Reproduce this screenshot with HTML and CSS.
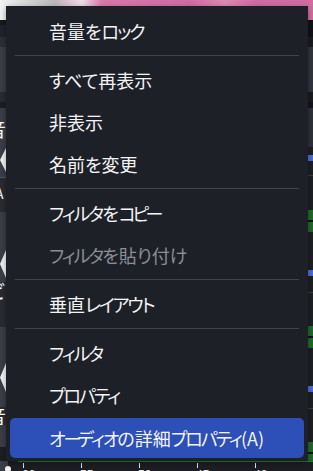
FILE: index.html
```html
<!DOCTYPE html>
<html lang="ja">
<head>
  <meta charset="UTF-8">
  <meta name="viewport" content="width=device-width, initial-scale=1.0">
  <title>音声ミキサー メニュー</title>
  <link rel="stylesheet" href="styles.css">
</head>
<body>
  <div class="app">
    <!-- Preview strip -->
    <div class="preview"></div>

    <!-- Audio mixer behind the menu -->
    <div class="mixer">
      <div class="edge edge-left">
        <div class="name name-1"><span>音</span></div>
        <div class="speaker speaker-1"></div>
        <div class="name name-2"><span>A</span></div>
        <div class="speaker speaker-2"></div>
        <div class="name name-3"><span>ビ</span></div>
        <div class="speaker speaker-3"></div>
        <div class="name name-4"><span>音</span></div>
      </div>
      <div class="mixer-body"></div>
      <div class="edge edge-right"></div>
    </div>

    <!-- dB scale -->
    <div class="scale">
      <div class="scale-knob"><span class="dot"></span></div>
      <div class="ticks">
        <div class="tick"><span>-60</span></div>
        <div class="tick"><span>-55</span></div>
        <div class="tick"><span>-50</span></div>
        <div class="tick"><span>-45</span></div>
        <div class="tick"><span>-40</span></div>
      </div>
    </div>
  </div>

  <!-- Context menu -->
  <div class="menu">
    <div class="item">音量を<span class="kana">ロック</span></div>
    <div class="sep"></div>
    <div class="item">すべて再表示</div>
    <div class="item">非表示</div>
    <div class="item">名前を変更</div>
    <div class="sep"></div>
    <div class="item"><span class="kana">フィルタ</span>を<span class="kana tight">コピ</span><span class="bar">ー</span></div>
    <div class="item disabled"><span class="kana">フィルタ</span>を貼り付け</div>
    <div class="sep"></div>
    <div class="item">垂直<span class="kana">レイアウト</span></div>
    <div class="sep"></div>
    <div class="item"><span class="kana">フィルタ</span></div>
    <div class="item"><span class="kana">プロパティ</span></div>
    <div class="item active"><span class="kana">オ</span><span class="bar">ー</span><span class="kana">ディオ</span>の詳細<span class="kana">プロパティ</span>(A)</div>
  </div>
</body>
</html>
```

FILE: styles.css
```css
:root {
  --menu-bg: #1e2028;
  --menu-text: #f4f4f6;
  --menu-muted: #8b8e96;
  --menu-sep: #41434d;
  --menu-active: #2c4fb8;
  --panel: #3b3d47;
  --panel-dark: #2a2b31;
  --mixer-bg: #1e1f24;
  --font-family: "Noto Sans CJK JP", "Noto Sans", sans-serif;
}
* { box-sizing: border-box; margin: 0; padding: 0; }
body { width: 313px; height: 471px; overflow: hidden; background-color: var(--mixer-bg); font-family: var(--font-family); }

.app { display: flex; flex-direction: column; height: 471px; }
.preview { height: 20px; background: linear-gradient(to right, #f3f3f3 0, #d8d8d8 25px, #b9b9b9 55px, #dcc3cf 68px, #ecdde4 82px, #d77aaa 102px, #cf6ca0 190px, #dc8ab4 225px, #cf6ca0 255px, #d06ea1 313px); }

.mixer { display: flex; height: 441px; }
.mixer-body { flex: 1; background-color: var(--mixer-bg); }
.edge { width: 6px; display: flex; flex-direction: column; align-items: stretch; overflow: hidden; }
.edge-right { width: 5px; background: linear-gradient(to bottom,
  #111216 0 17px, #1a1b1f 17px 27px, #33353e 27px 72px, #1a1b1f 72px 82px, #141518 82px 88px,
  #2f313a 88px 127px, #1e1f24 127px 135px, #4a6ed8 135px 141px, #1e1f24 141px 155px, #3b3d47 155px 156px,
  #1e1f24 156px 190px, #1e6a2a 190px 200px, #111216 200px 202px, #1e6a2a 202px 212px, #1e1f24 212px 250px,
  #4a6ed8 250px 256px, #1e1f24 256px 272px, #3b3d47 272px 273px, #1e1f24 273px 306px, #1e6a2a 306px 316px,
  #111216 316px 318px, #1e6a2a 318px 328px, #1e1f24 328px 366px, #4a6ed8 366px 372px, #1e1f24 372px 388px,
  #3b3d47 388px 389px, #1e1f24 389px 422px, #1e6a2a 422px 432px, #111216 432px 434px, #1e6a2a 434px 441px); }
.edge-left { background: linear-gradient(to bottom,
  #17181c 0 5px, #22232a 5px 17px, #2d2f36 17px 27px, var(--panel) 27px 72px, var(--panel-dark) 72px 82px,
  #1d1e23 82px 88px, var(--panel) 88px 157px, #55575f 157px 158px, var(--panel-dark) 158px 192px,
  var(--panel) 192px 262px, var(--panel-dark) 262px 307px, var(--panel) 307px 387px,
  var(--panel-dark) 387px 405px, var(--panel) 405px 427px, #1d1e23 427px 441px); }

.name { height: 18px; overflow: hidden; white-space: nowrap; color: #fff; font-size: 19px; line-height: 18px; }
.name span { display: block; margin-left: -13px; }
.name-1 { margin-top: 100px; height: 20px; }
.name-2 { margin-top: 15px; height: 13px; font-size: 14px; line-height: 13px; }
.name-2 span { margin-left: -5px; color: #f2f2ff; }
.name-3 { margin-top: 4px; }
.speaker { background-color: #f2f2f2; clip-path: polygon(0 50%, 100% 0, 100% 100%); }
.speaker-1 { margin-top: 8px; height: 24px; }
.speaker-2 { margin-top: 50px; height: 28px; }
.speaker-3 { margin-top: 63px; height: 29px; }
.name-4 { margin-top: 15px; }

.scale { height: 10px; display: flex; background-color: #1d1e23; overflow: hidden; }
.scale-knob { width: 27px; background-color: var(--panel); position: relative; }
.scale-knob .dot { position: absolute; left: 5px; top: 5px; width: 6px; height: 6px; border-radius: 50%; background-color: #f2f2f2; }
.ticks { flex: 1; display: flex; padding-left: 5px; border-top: 1px solid #2a7a34; margin-left: 10px; }
.tick { width: 58px; border-left: 1px solid #e8e8e8; height: 5px; margin-top: 1px; position: relative; flex-shrink: 0; }
.tick span { position: absolute; left: -6px; top: 6px; font-size: 12px; line-height: 12px; color: #e8e8e8; font-family: "Liberation Sans", sans-serif; }

/* Context menu */
.menu { position: absolute; left: 6px; top: 6px; width: 302px; height: 455px; padding: 4px 4px 3px; background-color: var(--menu-bg); box-shadow: 0 2px 6px rgba(0,0,0,0.35); }
.item { height: 42px; line-height: 42px; padding-left: 39px; font-size: 18px; color: var(--menu-text); font-feature-settings: "palt"; white-space: nowrap; }
.item .kana { letter-spacing: -2px; }
.item .kana.tight { letter-spacing: -3.5px; }
.item .bar { letter-spacing: -4px; }
.item.disabled { color: var(--menu-muted); }
.item.active { margin-top: 2px; height: 40px; line-height: 40px; background-color: var(--menu-active); border-radius: 5px; }
.sep { height: 7px; padding: 3px 5px 0; }
.sep::before { content: ""; display: block; height: 1px; background-color: var(--menu-sep); }
```
